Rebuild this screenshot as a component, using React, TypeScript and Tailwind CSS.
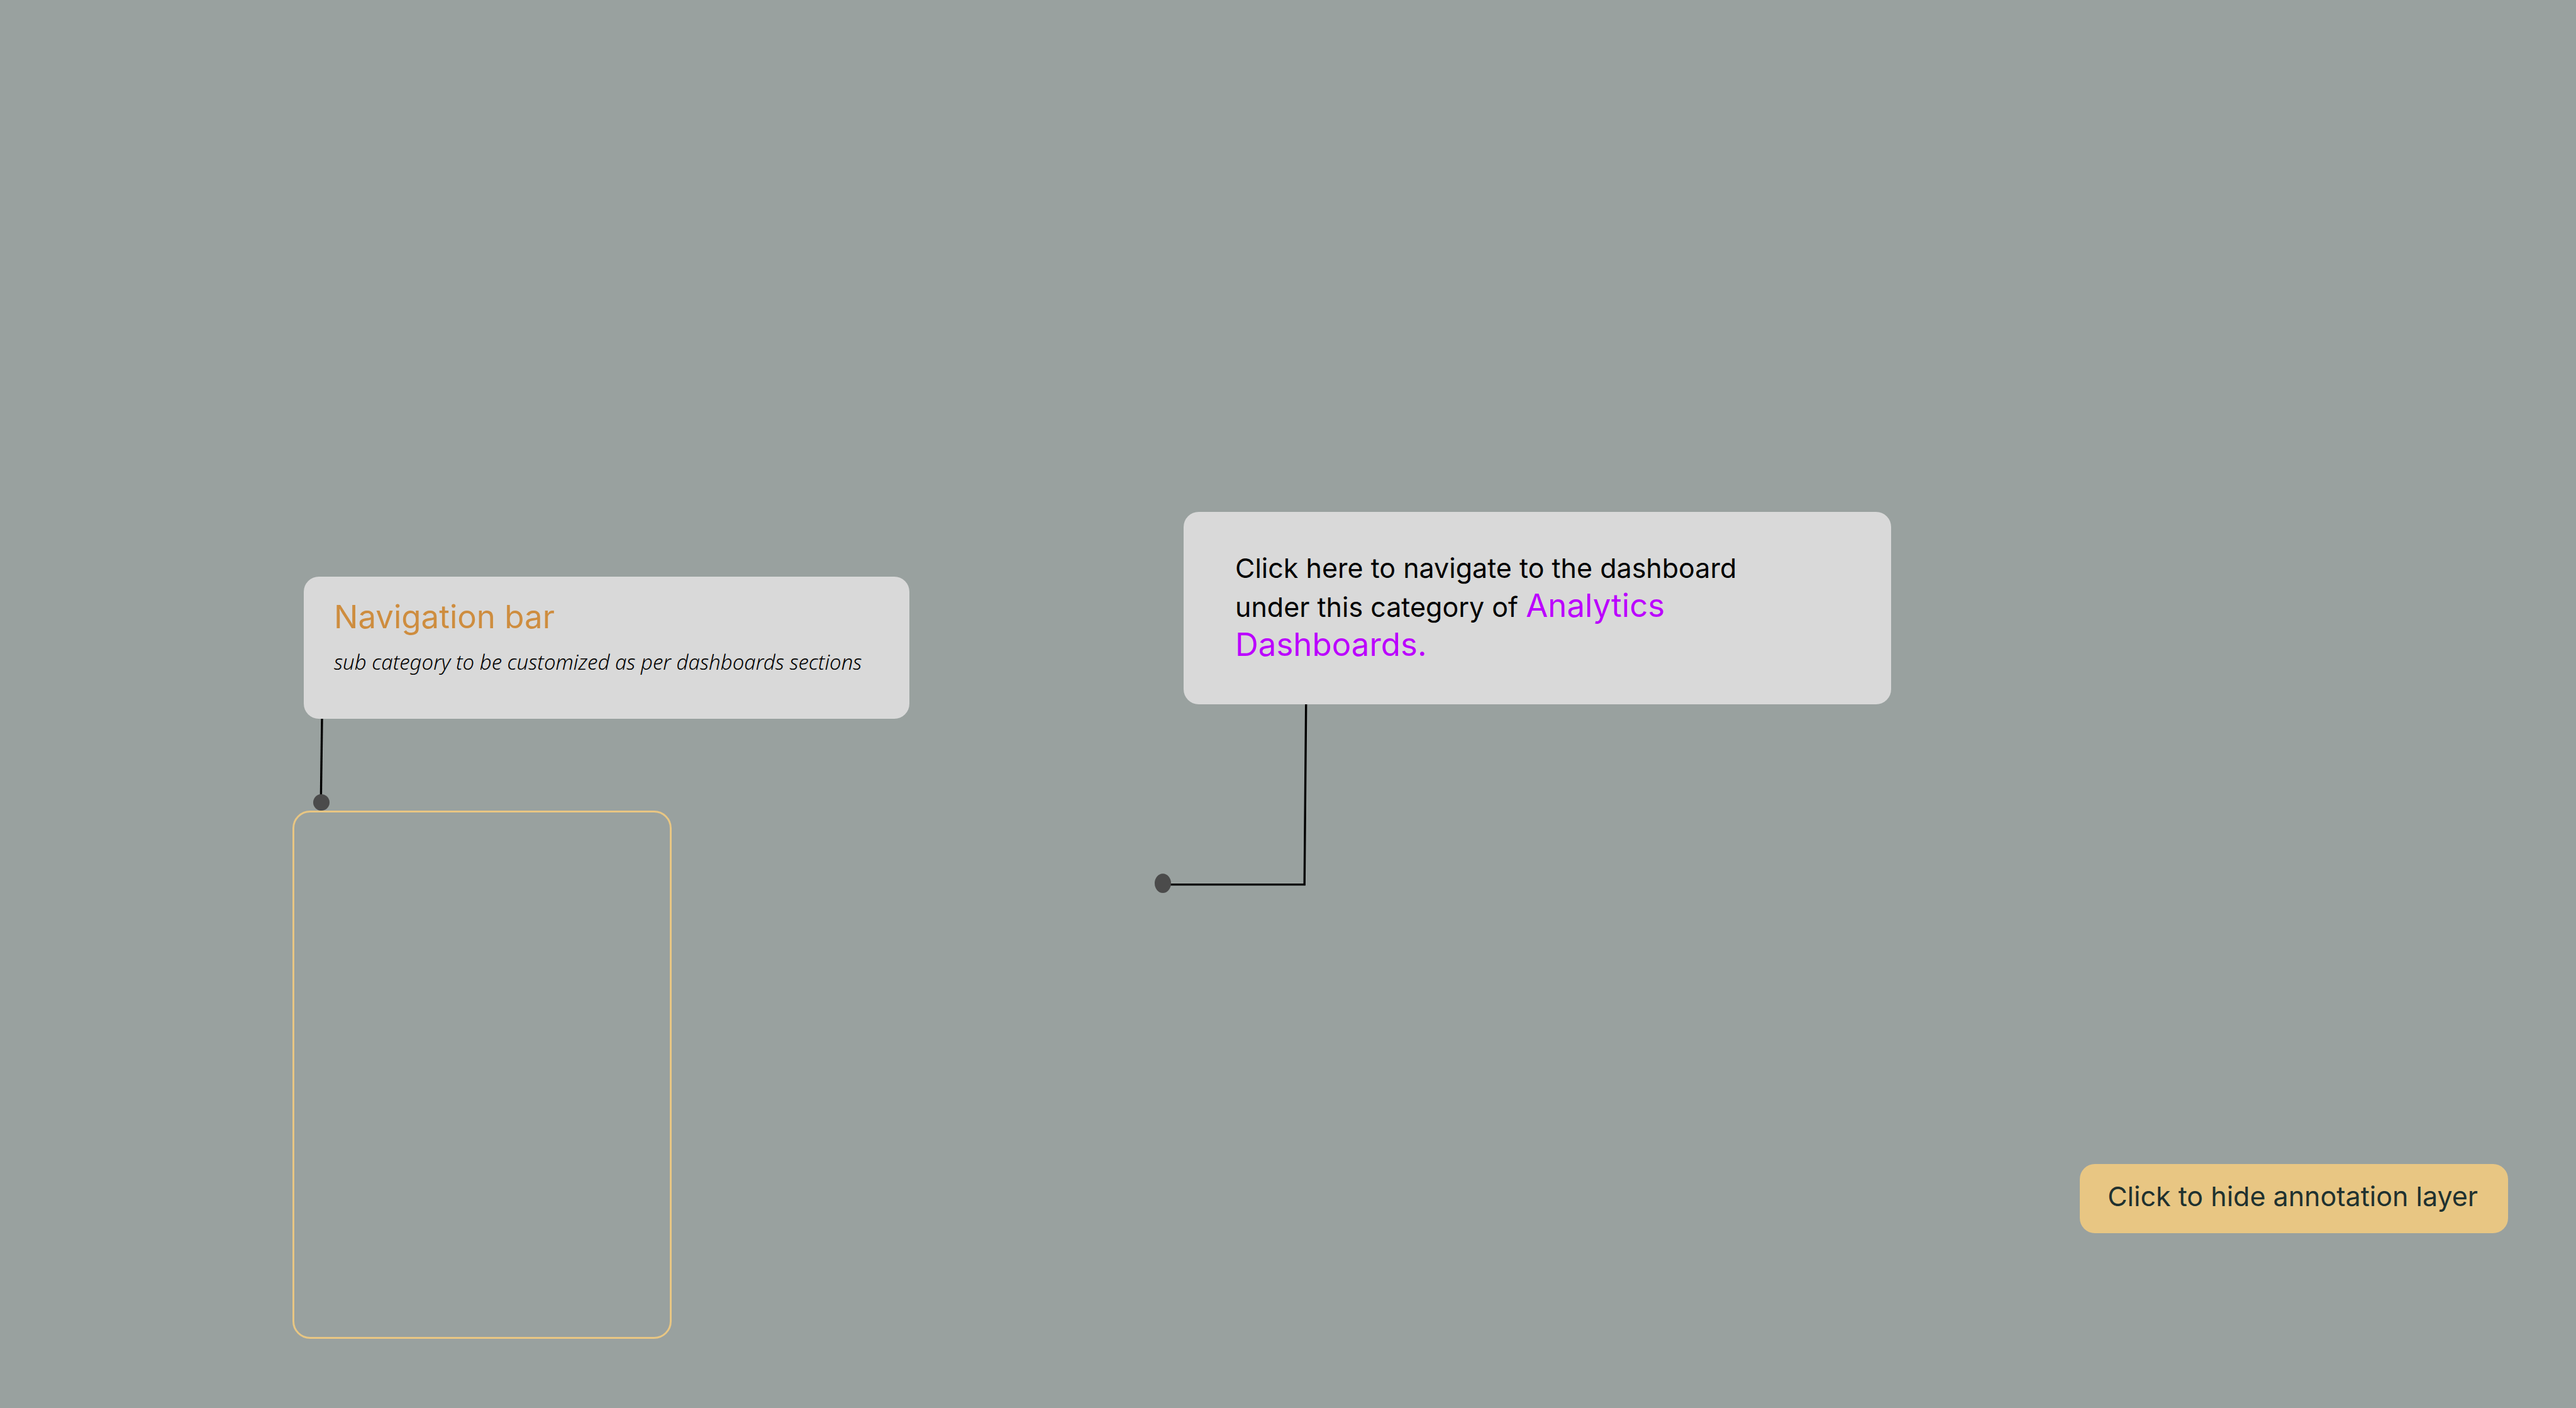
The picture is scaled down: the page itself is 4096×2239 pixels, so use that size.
import { useState } from "react";

function NavigationNote() {
  return (
    <section className="absolute left-[465px] top-[917px] flex flex-col items-start">
      <div className="ml-[18px] w-[963px] rounded-3xl bg-[#d9d9d9] px-12 pt-8 pb-[66px]">
        <h2 className="text-[51px] leading-[64px] text-[#ce8d3f]">Navigation bar</h2>
        <p className="mt-4 whitespace-nowrap font-['Noto_Sans',sans-serif] text-[33px] leading-[48px] font-light text-black italic">
          sub category to be customized as per dashboards sections
        </p>
      </div>
      <svg className="ml-[33px] block" width="26" height="146" viewBox="0 0 26 146" aria-hidden="true">
        <path d="M14 0L12.4 122" stroke="#000" strokeWidth="3.4" fill="none" />
        <ellipse cx="13" cy="133" rx="13" ry="13" fill="#4b4b4b" />
      </svg>
      <div className="h-[840px] w-[603px] rounded-[28px] border-[3px] border-[#e8c683]" />
    </section>
  );
}

function DashboardNote() {
  return (
    <section className="absolute left-[1836px] top-[814px] flex flex-col items-start">
      <div className="ml-[46px] w-[1125px] rounded-3xl bg-[#d9d9d9] pt-[58px] pr-[200px] pb-[62px] pl-[82px]">
        <p className="text-[43px] leading-[62px] text-black">
          Click here to navigate to the dashboard under this category of{" "}
          <span className="text-[51px] leading-none text-[#bb00ff]">Analytics Dashboards.</span>
        </p>
      </div>
      <svg className="block" width="244" height="300" viewBox="0 0 244 300" aria-hidden="true">
        <path d="M240.7 0L238.2 286.6H20" stroke="#000" strokeWidth="3.4" fill="none" />
        <ellipse cx="13" cy="284.6" rx="13" ry="15.4" fill="#4b4b4b" />
      </svg>
    </section>
  );
}

export default function App() {
  const [visible, setVisible] = useState(true);

  return (
    <main className="relative min-h-screen overflow-hidden bg-[#99a19f] font-['Inter',sans-serif]">
      {visible && (
        <>
          <NavigationNote />
          <DashboardNote />
          <button
            type="button"
            onClick={() => setVisible(false)}
            className="absolute top-[1851px] right-[108px] rounded-3xl bg-[#e8c683] pt-5 pr-12 pb-7 pl-11 text-[43px] leading-[62px] whitespace-nowrap text-[#20312f]"
          >
            Click to hide annotation layer
          </button>
        </>
      )}
    </main>
  );
}
